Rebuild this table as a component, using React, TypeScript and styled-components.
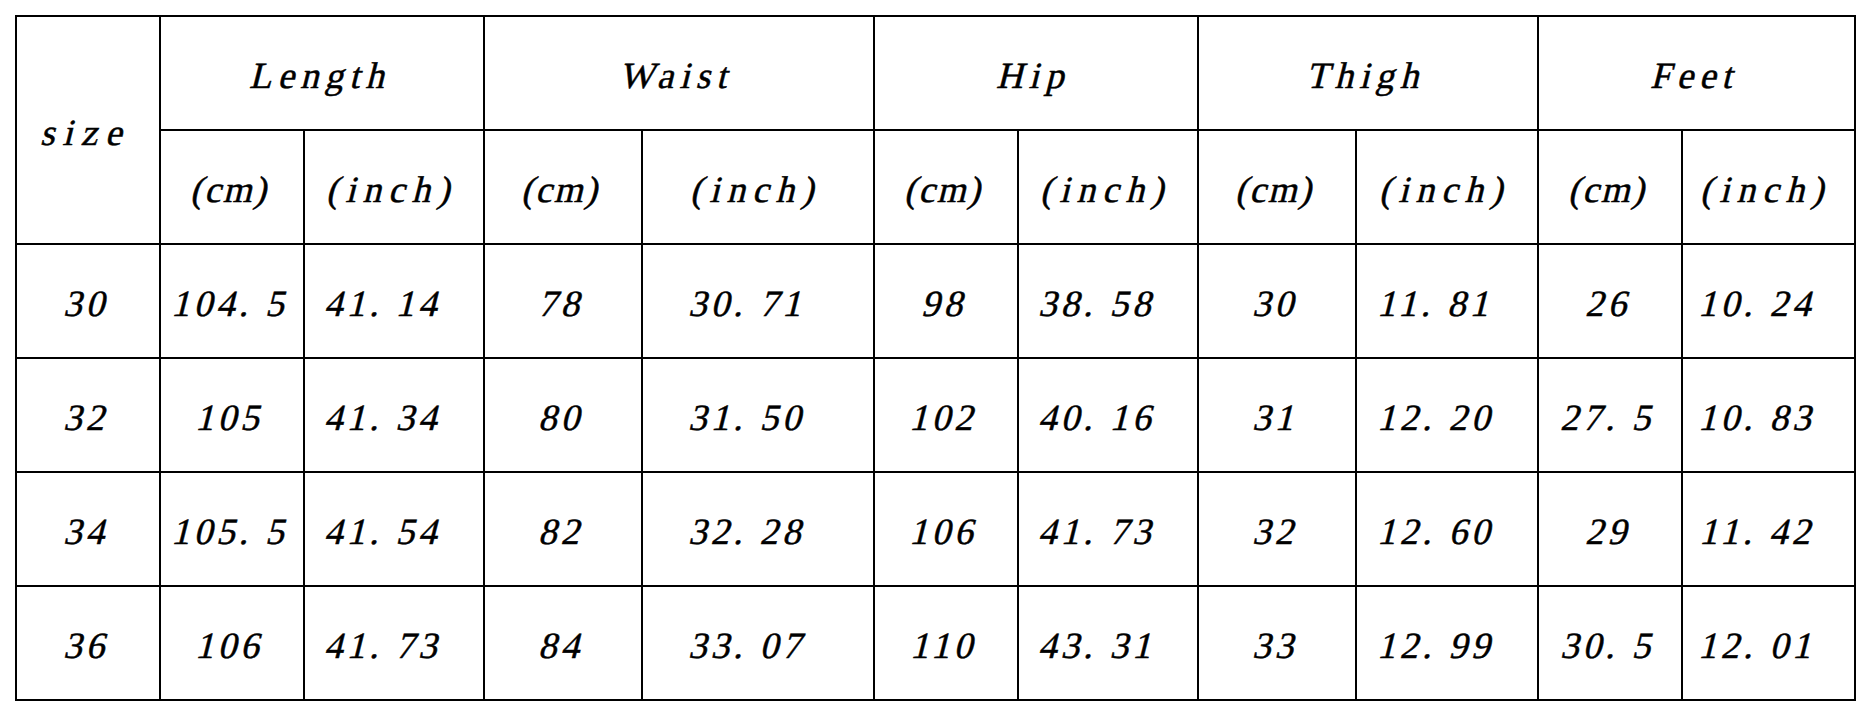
import React from 'react';
import styled, { createGlobalStyle } from 'styled-components';

const GlobalStyle = createGlobalStyle`
  html, body {
    margin: 0;
    padding: 0;
    background: #ffffff;
  }
`;

const Page = styled.div`
  padding: 15px 0 0 15px;
  width: 1870px;
  height: 716px;
  box-sizing: border-box;
  background: #ffffff;
`;

const Table = styled.table`
  border-collapse: collapse;
  table-layout: fixed;
  width: 1839px;
  font-family: 'Liberation Serif', serif;
  font-size: 37px;
  color: #000;
`;

const Row = styled.tr`
  height: 114px;
`;

const Cell = styled.td<{ $inch?: boolean }>`
  border: 2px solid #000;
  padding: 5px ${p => (p.$inch ? '18px' : '0')} 0 0;
  text-align: center;
  vertical-align: middle;
  white-space: nowrap;
`;

const Slant = styled.span<{ $track: number }>`
  display: inline-block;
  transform: skewX(-14deg);
  letter-spacing: ${p => p.$track}px;
  -webkit-text-stroke: 0.5px #000;
`;

const COLS = [144, 144, 180, 158, 232, 144, 180, 158, 182, 144, 173];

const GROUPS = ['Length', 'Waist', 'Hip', 'Thigh', 'Feet'];

const ROWS = [
  ['30', '104. 5', '41. 14', '78', '30. 71', '98', '38. 58', '30', '11. 81', '26', '10. 24'],
  ['32', '105', '41. 34', '80', '31. 50', '102', '40. 16', '31', '12. 20', '27. 5', '10. 83'],
  ['34', '105. 5', '41. 54', '82', '32. 28', '106', '41. 73', '32', '12. 60', '29', '11. 42'],
  ['36', '106', '41. 73', '84', '33. 07', '110', '43. 31', '33', '12. 99', '30. 5', '12. 01'],
];

export default function App() {
  return (
    <>
      <GlobalStyle />
      <Page>
        <Table>
          <colgroup>
            {COLS.map((w, i) => (
              <col key={i} style={{ width: w }} />
            ))}
          </colgroup>
          <tbody>
            <Row>
              <Cell rowSpan={2}>
                <Slant $track={8}>size</Slant>
              </Cell>
              {GROUPS.map(g => (
                <Cell key={g} colSpan={2}>
                  <Slant $track={6}>{g}</Slant>
                </Cell>
              ))}
            </Row>
            <Row>
              {GROUPS.map(g => (
                <React.Fragment key={g}>
                  <Cell>
                    <Slant $track={2}>(cm)</Slant>
                  </Cell>
                  <Cell>
                    <Slant $track={7}>(inch)</Slant>
                  </Cell>
                </React.Fragment>
              ))}
            </Row>
            {ROWS.map(row => (
              <Row key={row[0]}>
                {row.map((v, i) => (
                  <Cell key={i} $inch={i > 0 && i % 2 === 0}>
                    <Slant $track={4}>{v}</Slant>
                  </Cell>
                ))}
              </Row>
            ))}
          </tbody>
        </Table>
      </Page>
    </>
  );
}
